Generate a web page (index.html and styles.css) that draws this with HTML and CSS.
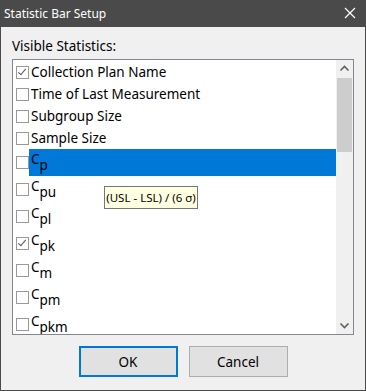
FILE: index.html
```html
<!DOCTYPE html>
<html lang="en">
<head>
  <meta charset="UTF-8">
  <title>Statistic Bar Setup</title>
  <link rel="stylesheet" href="styles.css">
</head>
<body>
  <div class="window">
    <div class="titlebar">
      <span class="title">Statistic Bar Setup</span>
      <svg class="close" width="12" height="12" viewBox="0 0 12 12">
        <path d="M1 1 L11 11 M11 1 L1 11" stroke="#fff" stroke-width="1.2" fill="none"/>
      </svg>
    </div>

    <div class="content">
      <div class="label">Visible Statistics:</div>

      <div class="listbox">
        <div class="items">
          <div class="item"><span class="check checked"></span><span class="text">Collection Plan Name</span></div>
          <div class="item"><span class="check"></span><span class="text">Time of Last Measurement</span></div>
          <div class="item"><span class="check"></span><span class="text">Subgroup Size</span></div>
          <div class="item"><span class="check"></span><span class="text">Sample Size</span></div>
          <div class="item tall selected"><span class="check"></span><span class="text">C<sub>p</sub></span></div>
          <div class="item tall"><span class="check"></span><span class="text">C<sub>pu</sub></span></div>
          <div class="item tall"><span class="check"></span><span class="text">C<sub>pl</sub></span></div>
          <div class="item tall"><span class="check checked"></span><span class="text">C<sub>pk</sub></span></div>
          <div class="item tall"><span class="check"></span><span class="text">C<sub>m</sub></span></div>
          <div class="item tall"><span class="check"></span><span class="text">C<sub>pm</sub></span></div>
          <div class="item tall"><span class="check"></span><span class="text">C<sub>pkm</sub></span></div>
        </div>

        <div class="scrollbar">
          <svg class="arrow" width="17" height="17" viewBox="0 0 17 17">
            <path d="M4.5 10.5 L8.5 6.5 L12.5 10.5" stroke="#606060" stroke-width="1.6" fill="none"/>
          </svg>
          <div class="thumb"></div>
          <div class="track"></div>
          <svg class="arrow" width="17" height="17" viewBox="0 0 17 17">
            <path d="M4.5 6.5 L8.5 10.5 L12.5 6.5" stroke="#606060" stroke-width="1.6" fill="none"/>
          </svg>
        </div>

        <div class="tooltip">(USL - LSL) / (6 σ)</div>
      </div>

      <div class="buttons">
        <button class="btn default">OK</button>
        <button class="btn">Cancel</button>
      </div>
    </div>
  </div>
</body>
</html>
```

FILE: styles.css
```css
body {
  margin: 0;
  font-family: "Noto Sans", "Open Sans", sans-serif;
  background: #f0f0f0;
}
.window {
  width: 366px;
  height: 391px;
  box-sizing: border-box;
  border: 1px solid #4a4a4a;
  border-top: none;
  background: #f0f0f0;
  display: flex;
  flex-direction: column;
}
.titlebar {
  height: 27px;
  margin: 0 -1px;
  background: #4a4a4a;
  display: flex;
  align-items: center;
  justify-content: space-between;
  padding: 0 10px 0 4px;
  color: #fff;
}
.title {
  font-size: 12px;
  padding-bottom: 1px;
}
.close {
  display: block;
  margin-bottom: 1px;
}
.content {
  flex: 1;
  padding: 8px 11px 0 11px;
  display: flex;
  flex-direction: column;
}
.label {
  font-size: 13.5px;
  line-height: 22px;
  height: 22px;
  margin-bottom: 2px;
  color: #000;
}
.listbox {
  position: relative;
  height: 276px;
  box-sizing: border-box;
  border: 1px solid #828790;
  background: #fff;
  display: flex;
}
.items {
  flex: 1;
  overflow: hidden;
  padding-top: 1px;
}
.item {
  display: flex;
  align-items: center;
  height: 22px;
  font-size: 13.5px;
  color: #000;
}
.item.tall {
  height: 27px;
}
.check {
  width: 11px;
  height: 11px;
  border: 1px solid #999;
  margin-left: 3px;
  flex-shrink: 0;
  position: relative;
  background: #fff;
}
.check.checked::after {
  content: "";
  position: absolute;
  left: 3px;
  top: 0px;
  width: 3px;
  height: 7px;
  border-right: 1.3px solid #555;
  border-bottom: 1.3px solid #555;
  transform: rotate(40deg);
}
.text {
  flex: 1;
  align-self: stretch;
  padding-left: 2px;
  line-height: 22px;
  white-space: nowrap;
}
.item.tall .text {
  line-height: 21px;
}
.text sub {
  font-size: 1em;
  vertical-align: -6px;
  line-height: 0;
}
.item.selected .text {
  background: #0078d7;
}
.scrollbar {
  width: 17px;
  background: #f0f0f0;
  display: flex;
  flex-direction: column;
}
.arrow {
  display: block;
}
.thumb {
  height: 74px;
  margin: 1px 1px 0 1px;
  background: #cdcdcd;
}
.track {
  flex: 1;
}
.tooltip {
  position: absolute;
  left: 91px;
  top: 126px;
  width: 94px;
  height: 23px;
  box-sizing: border-box;
  border: 1px solid #767676;
  background: #ffffe1;
  font-size: 11.5px;
  line-height: 21px;
  text-align: center;
  color: #000;
  white-space: nowrap;
}
.buttons {
  display: flex;
  justify-content: center;
  gap: 11px;
  margin-top: 11px;
}
.btn {
  width: 99px;
  height: 31px;
  box-sizing: border-box;
  border: 1px solid #adadad;
  background: #e1e1e1;
  font-family: "Noto Sans", "Open Sans", sans-serif;
  font-size: 13.5px;
  color: #000;
  padding: 0;
}
.btn.default {
  border: 2px solid #0078d7;
}
```
